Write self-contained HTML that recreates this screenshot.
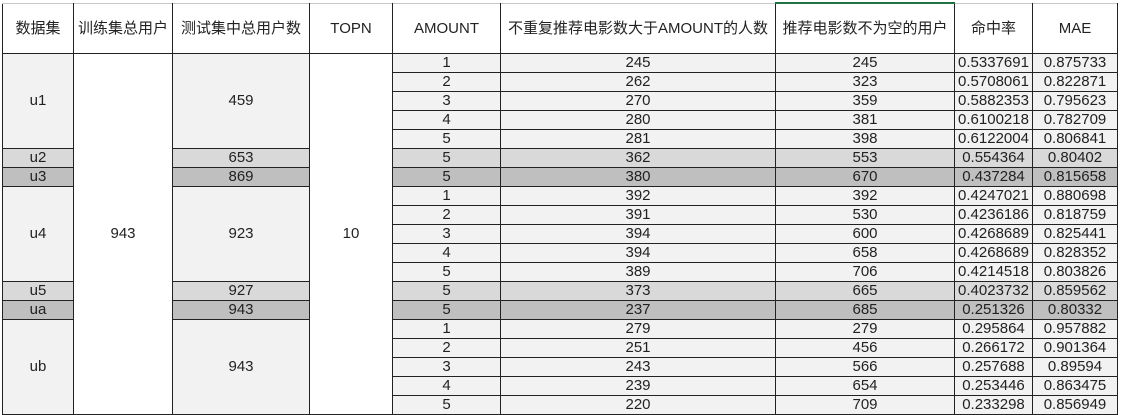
<!DOCTYPE html>
<html><head><meta charset="utf-8"><style>
html,body{margin:0;padding:0;background:#fff;width:1121px;height:415px;overflow:hidden}
table{position:absolute;left:2px;top:2px;border-collapse:collapse;table-layout:fixed;font-family:"Liberation Sans","Noto Sans CJK SC",sans-serif;font-size:15px;color:#222}
td{border:1px solid #222;padding:0;text-align:center;height:18px;line-height:18px;overflow:hidden;white-space:nowrap;vertical-align:bottom}
tr.h td{height:49px;line-height:49px;vertical-align:middle;background:#fff;border-top:1px solid #c8c8c8}
tr.h td.sel{border-top:2px solid #217346}
.a{background:#f2f2f2}.b{background:#d9d9d9}.c{background:#bfbfbf}.w{background:#fff;vertical-align:middle}
td.m{vertical-align:middle}
</style></head><body>
<table>
<colgroup><col style="width:71px"><col style="width:99px"><col style="width:137px"><col style="width:83px"><col style="width:108px"><col style="width:275px"><col style="width:179px"><col style="width:78px"><col style="width:85px"></colgroup>
<tr class="h"><td>数据集</td><td>训练集总用户</td><td>测试集中总用户数</td><td>TOPN</td><td>AMOUNT</td><td>不重复推荐电影数大于AMOUNT的人数</td><td class="sel">推荐电影数不为空的用户</td><td>命中率</td><td>MAE</td></tr>
<tr class="a"><td rowspan="5" class="m">u1</td><td rowspan="19" class="w">943</td><td rowspan="5" class="m">459</td><td rowspan="19" class="w">10</td><td>1</td><td>245</td><td>245</td><td>0.5337691</td><td>0.875733</td></tr>
<tr class="a"><td>2</td><td>262</td><td>323</td><td>0.5708061</td><td>0.822871</td></tr>
<tr class="a"><td>3</td><td>270</td><td>359</td><td>0.5882353</td><td>0.795623</td></tr>
<tr class="a"><td>4</td><td>280</td><td>381</td><td>0.6100218</td><td>0.782709</td></tr>
<tr class="a"><td>5</td><td>281</td><td>398</td><td>0.6122004</td><td>0.806841</td></tr>
<tr class="b"><td>u2</td><td>653</td><td>5</td><td>362</td><td>553</td><td>0.554364</td><td>0.80402</td></tr>
<tr class="c"><td>u3</td><td>869</td><td>5</td><td>380</td><td>670</td><td>0.437284</td><td>0.815658</td></tr>
<tr class="a"><td rowspan="5" class="m">u4</td><td rowspan="5" class="m">923</td><td>1</td><td>392</td><td>392</td><td>0.4247021</td><td>0.880698</td></tr>
<tr class="a"><td>2</td><td>391</td><td>530</td><td>0.4236186</td><td>0.818759</td></tr>
<tr class="a"><td>3</td><td>394</td><td>600</td><td>0.4268689</td><td>0.825441</td></tr>
<tr class="a"><td>4</td><td>394</td><td>658</td><td>0.4268689</td><td>0.828352</td></tr>
<tr class="a"><td>5</td><td>389</td><td>706</td><td>0.4214518</td><td>0.803826</td></tr>
<tr class="b"><td>u5</td><td>927</td><td>5</td><td>373</td><td>665</td><td>0.4023732</td><td>0.859562</td></tr>
<tr class="c"><td>ua</td><td>943</td><td>5</td><td>237</td><td>685</td><td>0.251326</td><td>0.80332</td></tr>
<tr class="a"><td rowspan="5" class="m">ub</td><td rowspan="5" class="m">943</td><td>1</td><td>279</td><td>279</td><td>0.295864</td><td>0.957882</td></tr>
<tr class="a"><td>2</td><td>251</td><td>456</td><td>0.266172</td><td>0.901364</td></tr>
<tr class="a"><td>3</td><td>243</td><td>566</td><td>0.257688</td><td>0.89594</td></tr>
<tr class="a"><td>4</td><td>239</td><td>654</td><td>0.253446</td><td>0.863475</td></tr>
<tr class="a"><td>5</td><td>220</td><td>709</td><td>0.233298</td><td>0.856949</td></tr>
</table>
</body></html>
